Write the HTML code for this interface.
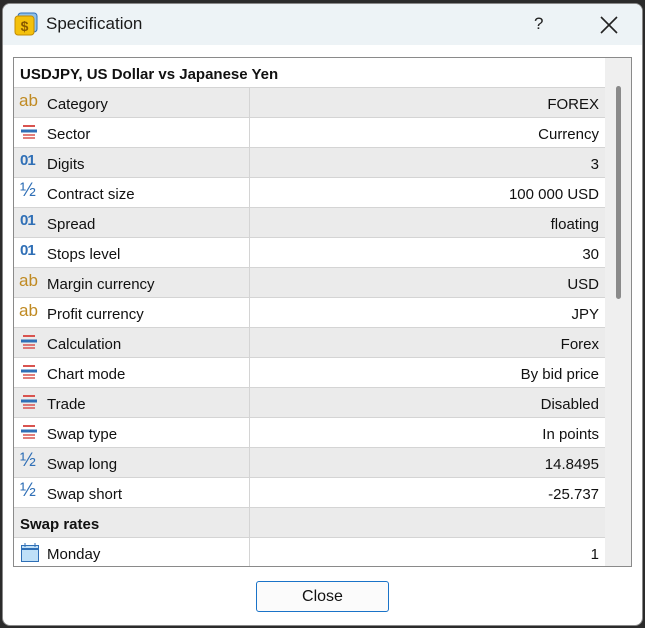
<!DOCTYPE html>
<html><head><style>
*{margin:0;padding:0;box-sizing:border-box}
body{width:645px;height:628px;background:#2b2b2b;font-family:"Liberation Sans",sans-serif;overflow:hidden;position:relative}
.win{position:absolute;left:2px;top:3px;width:641px;height:623px;background:#fff;border-radius:8px;overflow:hidden;border:1px solid #888}
.tb{height:41px;background:#edf3f6;position:relative}
.tb .t{position:absolute;left:43px;top:10px;font-size:17px;color:#1a1a1a}
.tb .q{position:absolute;left:531px;top:10px;font-size:17px;color:#222}
.box{position:absolute;left:10px;top:53px;width:619px;height:510px;border:1px solid #8a8a8a;overflow:hidden}
.row{position:absolute;left:0;width:591px;height:30px;border-bottom:1px solid #d4d4d4;font-size:15px;color:#111}
.row.g{background:#ebebeb}
.row .n{position:absolute;left:33px;top:8px}
.row .v{position:absolute;right:6px;top:8px}
.row .d{position:absolute;left:235px;top:0;width:1px;height:30px;background:#d4d4d4}
.row .ic{position:absolute;left:6px;top:7px;width:20px;height:20px;font-size:15px}
.sb{position:absolute;left:591px;top:0;width:27px;height:510px;background:#efefef}
.thumb{position:absolute;left:11px;top:28px;width:5px;height:213px;background:#8a8a8a;border-radius:3px}
.btn{position:absolute;left:253px;top:577px;width:133px;height:31px;border:1px solid #1a73c8;border-radius:3px;background:#fbfbfb;text-align:center;font-size:16px;line-height:30px;color:#111}
</style></head><body>
<div class="win">
<div class="tb">
<svg style="position:absolute;left:11px;top:8px" width="24" height="24" viewBox="0 0 24 24"><rect x="4" y="1" width="19" height="19" rx="3" fill="#8ec0ea" stroke="#2f6fb6"/><rect x="1" y="4" width="19" height="19" rx="3" fill="#f4c10c" stroke="#c48c00"/><text x="10.5" y="19" font-size="14" font-family="Liberation Sans" text-anchor="middle" fill="#8a5a00" font-weight="bold">$</text></svg>
<div class="t">Specification</div>
<div class="q">?</div>
<svg style="position:absolute;left:597px;top:12px" width="18" height="18"><path d="M1 1L17 17M17 1L1 17" stroke="#222" stroke-width="1.6"/></svg>
</div>
<div class="box">
<div class="row" style="top:0;height:30px"><span style="position:absolute;left:6px;top:8px;font-weight:bold">USDJPY, US Dollar vs Japanese Yen</span></div>
ROWS
</div>
<div class="btn">Close</div>
</div>
<script>
var icons={
ab:'<span style="color:#c08a22;position:absolute;left:-1px;top:-4px;font-size:17px">ab</span>',
li:'<svg width="20" height="20" style="position:absolute;top:-3px"><path d="M3 4h12" stroke="#d9534f" stroke-width="2"/><path d="M1 9h16" stroke="#2f6fb6" stroke-width="3"/><path d="M3 13h12M3 16h12" stroke="#d9534f" stroke-width="1.5"/></svg>',
o1:'<span style="color:#2f6fb6;position:absolute;left:0;top:-3px;font-size:15px;font-weight:bold;letter-spacing:-1px">01</span>',
h:'<span style="color:#2f6fb6;position:absolute;left:0;top:-5px;font-size:19px">½</span>',
cal:'<svg width="20" height="20" style="position:absolute;top:-3px"><rect x="1.5" y="3.5" width="17" height="16" fill="#bfe0f8" stroke="#2f6fb6"/><path d="M1.5 7h17" stroke="#2f6fb6" stroke-width="2"/><path d="M5 1v4M15 1v4" stroke="#2f6fb6"/></svg>'};
var rows=[['ab','Category','FOREX'],['li','Sector','Currency'],['o1','Digits','3'],['h','Contract size','100 000 USD'],['o1','Spread','floating'],['o1','Stops level','30'],['ab','Margin currency','USD'],['ab','Profit currency','JPY'],['li','Calculation','Forex'],['li','Chart mode','By bid price'],['li','Trade','Disabled'],['li','Swap type','In points'],['h','Swap long','14.8495'],['h','Swap short','-25.737'],['b','Swap rates',''],['cal','Monday','1']];
var h='';rows.forEach(function(r,i){var top=30+i*30;var g=i%2==0?' g':'';
if(r[0]=='b'){h+='<div class="row'+g+'" style="top:'+top+'px"><span style="position:absolute;left:6px;top:8px;font-weight:bold">'+r[1]+'</span><div class="d"></div></div>';}
else h+='<div class="row'+g+'" style="top:'+top+'px"><div class="ic">'+icons[r[0]]+'</div><span class="n">'+r[1]+'</span><div class="d"></div><span class="v">'+r[2]+'</span></div>';});
h+='<div class="sb"><div class="thumb"></div></div>';
var b=document.querySelector('.box');b.innerHTML=b.innerHTML.replace('ROWS',h);
</script>
</body></html>
